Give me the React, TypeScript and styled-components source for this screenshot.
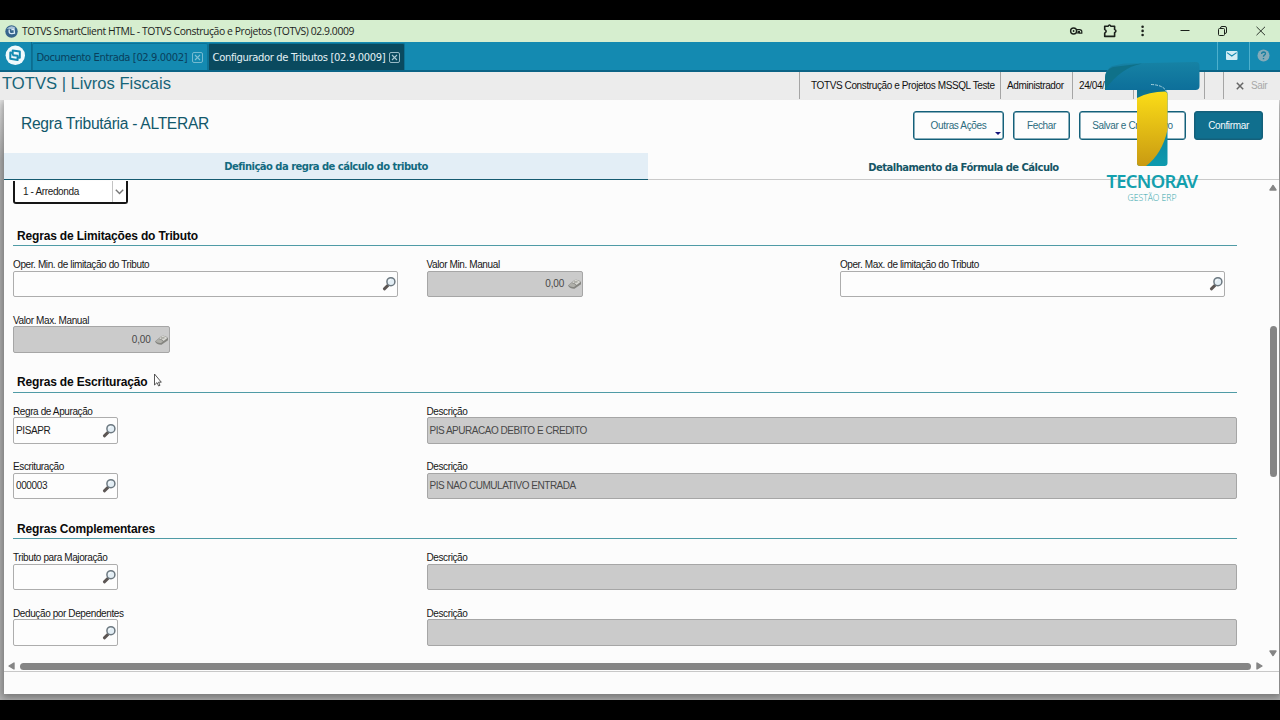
import React from "react";
import styled, { createGlobalStyle } from "styled-components";

const Global = createGlobalStyle`
  * { box-sizing: border-box; }
  html, body { margin: 0; padding: 0; background: #000; overflow: hidden; }
  body { font-family: "Liberation Sans", Arial, sans-serif; }
`;

const Screen = styled.div`
  width: 1280px;
  height: 720px;
  padding: 20px 0;
  background: #000;
  position: relative;
  display: flex;
  flex-direction: column;
  overflow: hidden;
`;

const TitleBar = styled.header`
  height: 22px;
  flex: none;
  background: #d6eecf;
  display: flex;
  align-items: center;
  padding-left: 5px;
`;
const WindowTitle = styled.span`
  font: 10.4px/20px "Open Sans", "Noto Sans", sans-serif;
  letter-spacing: -0.42px;
  color: #1c241c;
  margin: -1px 0 0 4px;
  flex: 1;
  white-space: nowrap;
`;
const WindowIcons = styled.div`
  display: flex;
  align-items: center;
  svg { display: block; }
`;

const TabBar = styled.nav`
  height: 30px;
  flex: none;
  background: #148ab1;
  border-bottom: 2px solid #0b6486;
  display: flex;
`;
const HomeCell = styled.div`
  width: 32px;
  border-right: 1px solid #0c6c8f;
  padding: 3px 0 0 5px;
`;
const AppTab = styled.div<{ $active?: boolean; $width: number }>`
  width: ${(p) => p.$width}px;
  margin-top: 1px;
  padding: 1px 4px 0 3.5px;
  border: 1px solid #0d7396;
  border-width: 1px 1px 0 1px;
  border-radius: 2px 2px 0 0;
  background: ${(p) => (p.$active ? "#0a4a5f" : "#148ab1")};
  color: ${(p) => (p.$active ? "#e4f1f5" : "#093f5c")};
  font: 10px/24px "DejaVu Sans", Verdana, sans-serif;
  letter-spacing: ${(p) => (p.$active ? "-0.35px" : "-0.4px")};
  white-space: nowrap;
  display: flex;
  align-items: center;
  justify-content: space-between;
`;
const TabActions = styled.div`
  margin-left: auto;
  display: flex;
`;
const TabAction = styled.div`
  width: 31.5px;
  border-left: 1px solid #4db0cd;
  display: flex;
  justify-content: center;
  padding: 7px 2px 0 0;
`;

const InfoBar = styled.div`
  height: 27px;
  flex: none;
  background: #ececec;
  display: flex;
`;
const ModuleTitle = styled.h1`
  margin: 0;
  padding-left: 2px;
  flex: 1;
  font-weight: 400;
  font-size: 16.6px;
  line-height: 23px;
  color: #176478;
`;
const InfoCell = styled.div<{ $width: number; $pad?: number }>`
  width: ${(p) => p.$width}px;
  flex: none;
  border-left: 1px solid #a5a5a5;
  padding-left: ${(p) => p.$pad ?? 6}px;
  font-size: 10px;
  letter-spacing: -0.39px;
  line-height: 27px;
  color: #111;
  white-space: nowrap;
`;
const ExitCell = styled(InfoCell)`
  color: #a8a8a8;
  display: flex;
  align-items: center;
  gap: 7px;
`;

const Stage = styled.div`
  flex: 1;
  min-height: 0;
  padding: 1px 1px 7px 4px;
  background: linear-gradient(#ececec, #b4b4b4 60px, #b4b4b4);
  overflow: hidden;
`;
const Panel = styled.main`
  height: 594px;
  background: #fcfcfc;
  box-shadow: 0 2px 8px 2px rgba(0, 0, 0, 0.35);
  clip-path: inset(0 -1px -8px -4px);
  display: flex;
  flex-direction: column;
`;
const PanelHead = styled.div`
  height: 53px;
  flex: none;
  display: flex;
  padding: 11px 16px 0 17px;
`;
const PanelTitle = styled.h2`
  margin: 0;
  flex: 1;
  font-weight: 400;
  font-size: 15.6px;
  letter-spacing: -0.29px;
  line-height: 26px;
  color: #12586b;
`;
const Button = styled.button<{ $width: number; $primary?: boolean; $left?: number }>`
  width: ${(p) => p.$width}px;
  height: 29px;
  margin-left: ${(p) => p.$left ?? 9}px;
  padding: 0;
  border: 1px solid #14607a;
  box-shadow: inset 0 0 0 0.5px #14607a;
  border-radius: 3px;
  background: ${(p) => (p.$primary ? "#106f8e" : "#fdfdfd")};
  color: ${(p) => (p.$primary ? "#f4fafc" : "#2c6c7e")};
  font: 10px/26px "Liberation Sans", Arial, sans-serif;
  letter-spacing: -0.35px;
  position: relative;
`;
const Caret = styled.i`
  position: absolute;
  right: 2px;
  bottom: 4px;
  border: 3px solid transparent;
  border-top-color: #14147a;
  border-bottom: 0;
`;

const PageTabs = styled.div`
  height: 28px;
  flex: none;
  display: flex;
`;
const PageTab = styled.div<{ $active?: boolean }>`
  width: ${(p) => (p.$active ? 644 : 631)}px;
  height: ${(p) => (p.$active ? 27 : 27)}px;
  background: ${(p) => (p.$active ? "#e3eef6" : "transparent")};
  border-bottom: ${(p) => (p.$active ? "1.5px solid #155a70" : "1px solid #c9c9c9")};
  color: ${(p) => (p.$active ? "#126a80" : "#155566")};
  font: bold 10px/${(p) => (p.$active ? 28 : 29)}px "DejaVu Sans", Verdana, sans-serif;
  letter-spacing: -0.53px;
  text-align: center;
`;

const ScrollArea = styled.div`
  height: 491px;
  flex: none;
  display: flex;
  border-bottom: 1px solid #c8c8c8;
`;
const ScrollMain = styled.div`
  width: 1263px;
  display: flex;
  flex-direction: column;
`;
const Form = styled.div`
  height: 479px;
  padding-left: 9px;
  overflow: hidden;
`;
const Select = styled.div`
  width: 115px;
  height: 23px;
  margin-bottom: 21.5px;
  border: 2px solid #161616;
  border-width: 0 2px 2px 2px;
  border-radius: 0 0 3px 3px;
  background: #fff;
  font-size: 10px;
  letter-spacing: -0.36px;
  line-height: 21px;
  padding-left: 8px;
  color: #1a1a1a;
  display: flex;
  justify-content: space-between;
`;
const SelectArrow = styled.span`
  width: 14px;
  border-left: 1px solid #c4c4c4;
  display: flex;
  align-items: center;
  justify-content: center;
`;
const Section = styled.section`
  height: 146.6px;
`;
const SectionTitle = styled.h3`
  margin: 0 0 12px;
  width: 1224px;
  height: 20.5px;
  border-bottom: 1px solid #4f9ba6;
  padding-left: 4px;
  font-size: 12px;
  letter-spacing: -0.165px;
  line-height: 20px;
  color: #0a0a0a;
`;
const Row = styled.div`
  display: grid;
  grid-template-columns: 413.5px 413.4px 1fr;
  height: 55.6px;
`;
const Field = styled.div<{ $span?: number }>`
  grid-column: span ${(p) => p.$span ?? 1};
`;
const Label = styled.label`
  display: block;
  height: 12.5px;
  font-size: 10px;
  letter-spacing: -0.39px;
  line-height: 13px;
  color: #161616;
  white-space: nowrap;
`;
const Input = styled.div<{ $width: number; $disabled?: boolean; $right?: boolean }>`
  width: ${(p) => p.$width}px;
  height: 26.5px;
  border: 1px solid ${(p) => (p.$disabled ? "#a6a6a6" : "#adadad")};
  border-radius: 2px;
  background: ${(p) => (p.$disabled ? "#cbcbcb" : "#fdfdfd")};
  color: ${(p) => (p.$disabled ? "#484848" : "#1c1c1c")};
  font-size: 10px;
  letter-spacing: ${(p) => (p.$right ? "-0.2px" : p.$disabled ? "-0.48px" : "-0.38px")};
  padding: 0 0 0 2px;
  display: flex;
  align-items: center;
  justify-content: ${(p) => (p.$right ? "flex-end" : "space-between")};
  gap: 3px;
  white-space: nowrap;
`;

const HScroll = styled.div`
  height: 11px;
  padding: 1px 3px 0 4px;
  display: flex;
  align-items: center;
  gap: 5px;
`;
const HThumb = styled.div`
  width: 1231px;
  height: 7px;
  border-radius: 4px;
  background: #858585;
`;
const VScroll = styled.div`
  width: 12px;
  padding: 3px 0 14px 0;
  display: flex;
  flex-direction: column;
  justify-content: space-between;
  align-items: center;
`;
const VThumb = styled.div`
  width: 7px;
  height: 151px;
  margin-bottom: 38px;
  border-radius: 4px;
  background: #858585;
`;

const Brand = styled.div`
  position: absolute;
  left: 1102px;
  top: 60px;
  width: 100px;
  display: flex;
  flex-direction: column;
  align-items: center;
`;
const BrandName = styled.div`
  font: 600 18.4px/22px "Noto Sans", "Open Sans", sans-serif;
  letter-spacing: -0.7px;
  color: #14a0ae;
  margin-top: 2px;
`;
const BrandTag = styled.div`
  font: 300 8.6px/11px "Open Sans", "Noto Sans", sans-serif;
  color: #2fa3aa;
  margin-top: 1px;
`;
const Pointer = styled.svg`
  position: absolute;
  left: 153px;
  top: 373px;
`;

const Lens = () => (
  <svg width="15" height="15" viewBox="0 0 15 15">
    <path d="M2.4 12.8 L6.2 9.2" stroke="#5c5654" strokeWidth="3" strokeLinecap="round" />
    <circle cx="8.9" cy="5.7" r="4" fill="#e3eef5" stroke="#6c7880" strokeWidth="1.5" />
    <path d="M6.800 5.500 A2.200 2.200 0 0 1 8.900 3.500" stroke="#fff" fill="none" />
  </svg>
);
const Eraser = () => (
  <svg width="15" height="13" viewBox="0 0 15 13">
    <path d="M1 8.500 L7.500 3 Q11 2 14 5 L14 7.300 L7.500 11.700 Q3 11.900 1 8.500Z" fill="#858580" />
    <path d="M5 5.500 L8 3.100 Q11 2.500 13.400 5.100 L9.600 8.100 Q8 5.700 5 5.500Z" fill="#d9d9d4" />
    <path d="M1.500 8.300 L4.400 6 Q7.400 6.100 9 8.500 L7 10 Q3.400 10.500 1.500 8.300Z" fill="#b0b0aa" />
    <path d="M7 5 L10.500 4.900" stroke="#77776f" strokeWidth=".8" />
  </svg>
);
const CloseBox = ({ color }: { color: string }) => (
  <svg width="11" height="12" viewBox="0 0 11 12" fill="none" stroke={color}>
    <rect x=".5" y=".5" width="10" height="10" rx="1.5" strokeWidth=".9" />
    <path d="M3 3 L8 8 M8 3 L3 8" strokeWidth="1.1" />
  </svg>
);
const Arrow = ({ d, w = 8, h = 8 }: { d: string; w?: number; h?: number }) => (
  <svg width={w} height={h} viewBox={`0 0 ${w} ${h}`}>
    <path d={d} fill="#858585" stroke="#858585" strokeWidth="1.4" strokeLinejoin="round" />
  </svg>
);

type FieldProps = {
  label: string;
  value?: string;
  width: number;
  kind: "search" | "number" | "text";
  span?: number;
};
const FormField = ({ label, value, width, kind, span }: FieldProps) => (
  <Field $span={span}>
    <Label>{label}</Label>
    <Input $width={width} $disabled={kind !== "search"} $right={kind === "number"}>
      <span>{value}</span>
      {kind === "search" && <Lens />}
      {kind === "number" && <Eraser />}
    </Input>
  </Field>
);

export default function App() {
  return (
    <>
      <Global />
      <Screen>
        <TitleBar>
          <svg width="13" height="13" viewBox="0 0 13 13">
            <circle cx="6.5" cy="6.5" r="6.2" fill="#37658c" />
            <path d="M1.5 4 Q6 -1 10.5 2.8 L8 5 Q4 3 1.5 4Z" fill="#a9c3d8" />
            <path d="M4.2 4.5 L4.2 7.2 Q4.6 9 7 8.6 L9.5 8.2 L9 4.2 L6.4 4.8" fill="none" stroke="#d9ebf7" strokeWidth="1.3" />
          </svg>
          <WindowTitle>TOTVS SmartClient HTML - TOTVS Construção e Projetos (TOTVS) 02.9.0009</WindowTitle>
          <WindowIcons>
            <svg width="216" height="22" viewBox="1064 20 216 22" fill="none" stroke="#1b211b">
              <circle cx="1073.6" cy="31" r="3" strokeWidth="1.4" />
              <circle cx="1073.6" cy="31" r=".9" fill="#1b211b" stroke="none" />
              <path d="M1076.4 29.6 H1079.5 Q1081.8 29.800 1081.8 31.500 V33.200 H1079.400 V31.6 H1078.2 V33 H1076.4" strokeWidth="1.2" />
              <path d="M1104.7 26.3 H1108 Q1109.5 23.8 1111 26.3 H1114.6 V29.4 Q1117.2 31 1114.6 32.6 V36.4 H1104.7 V33.2 Q1107.6 31.4 1104.7 29.4Z" strokeWidth="1.6" strokeLinejoin="round" />
              <g fill="#1b211b" stroke="none">
                <circle cx="1142.6" cy="26.8" r="1.3" />
                <circle cx="1142.6" cy="30.9" r="1.3" />
                <circle cx="1142.6" cy="35" r="1.3" />
              </g>
              <path d="M1180.500 30.5 H1189.500" />
              <rect x="1218.5" y="28.5" width="6" height="7" rx="1" />
              <path d="M1220.5 28 Q1220.5 26.5 1222 26.5 H1225 Q1226.5 26.5 1226.5 28 V32 Q1226.5 33.5 1225 33.5" />
              <path d="M1256.500 26.800 L1265 35.200 M1265 26.800 L1256.500 35.200" strokeWidth=".9" />
            </svg>
          </WindowIcons>
        </TitleBar>

        <TabBar>
          <HomeCell>
            <svg width="21" height="21" viewBox="0 0 21 21" fill="none" stroke="#148ab1" strokeWidth="2" strokeLinejoin="round">
              <circle cx="10.3" cy="10.3" r="9.7" fill="#f0f9fc" stroke="none" />
              <path d="M7.700 10.500 V5.600 L14.800 6.600 V12.800 L12.800 12.500" />
              <path d="M7.700 7.900 L5.300 7.600 V13.800 L12.600 15 V10.800 L7.700 10.300" />
            </svg>
          </HomeCell>
          <AppTab $width={176}>
            Documento Entrada [02.9.0002]
            <CloseBox color="#7fc0d4" />
          </AppTab>
          <AppTab $width={197} $active>
            Configurador de Tributos [02.9.0009]
            <CloseBox color="#a9c8d2" />
          </AppTab>
          <TabActions>
            <TabAction>
              <svg width="12" height="13" viewBox="0 0 12 13">
                <rect x="0" y="2" width="11.5" height="9" rx="1" fill="#d3edf5" />
                <path d="M1 3.6 L5.8 7 L10.6 3.6" stroke="#148ab1" strokeWidth="1.1" fill="none" />
              </svg>
            </TabAction>
            <TabAction>
              <svg width="13" height="13" viewBox="0 0 13 13">
                <circle cx="6.5" cy="6.5" r="6" fill="#84abb9" />
                <path d="M4.6 5 Q4.7 3 6.6 3 Q8.6 3.1 8.4 4.9 Q8.2 5.8 7.1 6.4 Q6.5 6.8 6.5 7.7 M6.5 9 V10.2" stroke="#1a7fa0" strokeWidth="1.4" fill="none" />
              </svg>
            </TabAction>
          </TabActions>
        </TabBar>

        <InfoBar>
          <ModuleTitle>TOTVS | Livros Fiscais</ModuleTitle>
          <InfoCell $width={201} $pad={11}>TOTVS Construção e Projetos MSSQL Teste</InfoCell>
          <InfoCell $width={72}>Administrador</InfoCell>
          <InfoCell $width={61}>24/04/2024</InfoCell>
          <InfoCell $width={71} />
          <InfoCell $width={19} />
          <ExitCell $width={57} $pad={12}>
            <svg width="8" height="8" viewBox="0 0 8 8">
              <path d="M.8 .8 L7.2 7.2 M7.2 .8 L.8 7.2" stroke="#666" strokeWidth="1.5" />
            </svg>
            Sair
          </ExitCell>
        </InfoBar>

        <Stage>
          <Panel>
            <PanelHead>
              <PanelTitle>Regra Tributária - ALTERAR</PanelTitle>
              <Button $width={91}>
                Outras Ações
                <Caret />
              </Button>
              <Button $width={57}>Fechar</Button>
              <Button $width={107}>Salvar e Criar Novo</Button>
              <Button $width={69} $left={8} $primary>Confirmar</Button>
            </PanelHead>
            <PageTabs>
              <PageTab $active>Definição da regra de cálculo do tributo</PageTab>
              <PageTab>Detalhamento da Fórmula de Cálculo</PageTab>
            </PageTabs>
            <ScrollArea>
              <ScrollMain>
                <Form>
                  <Select>
                    1 - Arredonda
                    <SelectArrow>
                      <svg width="9" height="6" viewBox="0 0 9 6">
                        <path d="M.8 .8 L4.5 4.6 L8.2 .8" stroke="#777" strokeWidth="1.4" fill="none" />
                      </svg>
                    </SelectArrow>
                  </Select>
                  <Section>
                    <SectionTitle>Regras de Limitações do Tributo</SectionTitle>
                    <Row>
                      <FormField label="Oper. Min. de limitação do Tributo" width={385} kind="search" />
                      <FormField label="Valor Min. Manual" value="0,00" width={156.5} kind="number" />
                      <FormField label="Oper. Max. de limitação do Tributo" width={385} kind="search" />
                    </Row>
                    <Row>
                      <FormField label="Valor Max. Manual" value="0,00" width={156.5} kind="number" />
                    </Row>
                  </Section>
                  <Section>
                    <SectionTitle>Regras de Escrituração</SectionTitle>
                    <Row>
                      <FormField label="Regra de Apuração" value="PISAPR" width={105} kind="search" />
                      <FormField label="Descrição" value="PIS APURACAO DEBITO E CREDITO" width={810.5} kind="text" span={2} />
                    </Row>
                    <Row>
                      <FormField label="Escrituração" value="000003" width={105} kind="search" />
                      <FormField label="Descrição" value="PIS NAO CUMULATIVO ENTRADA" width={810.5} kind="text" span={2} />
                    </Row>
                  </Section>
                  <Section>
                    <SectionTitle>Regras Complementares</SectionTitle>
                    <Row>
                      <FormField label="Tributo para Majoração" width={105} kind="search" />
                      <FormField label="Descrição" width={810.5} kind="text" span={2} />
                    </Row>
                    <Row>
                      <FormField label="Dedução por Dependentes" width={105} kind="search" />
                      <FormField label="Descrição" width={810.5} kind="text" span={2} />
                    </Row>
                  </Section>
                </Form>
                <HScroll>
                  <Arrow d="M6 1 L1 4 L6 7Z" w={7} />
                  <HThumb />
                  <Arrow d="M1 1 L6 4 L1 7Z" w={7} />
                </HScroll>
              </ScrollMain>
              <VScroll>
                <Arrow d="M1 6 L4 1.5 L7 6Z" />
                <VThumb />
                <Arrow d="M1 2 L4 6.5 L7 2Z" />
              </VScroll>
            </ScrollArea>
          </Panel>
        </Stage>

        <Brand>
          <svg width="100" height="108" viewBox="1102 60 100 108">
            <defs>
              <linearGradient id="bar" x1="0" y1="0" x2="0" y2="1">
                <stop offset="0" stopColor="#1682a4" />
                <stop offset="1" stopColor="#0d6f9a" />
              </linearGradient>
              <linearGradient id="gold" x1="0" y1="0" x2="0" y2="1">
                <stop offset="0" stopColor="#fbdd17" />
                <stop offset="1" stopColor="#c99a12" />
              </linearGradient>
              <linearGradient id="stem" x1="0" y1="0" x2="0" y2="1">
                <stop offset="0" stopColor="#0d708c" />
                <stop offset="1" stopColor="#0e9aae" />
              </linearGradient>
            </defs>
            <path d="M1137 88 H1163 Q1167.5 90 1167.5 94 V163 Q1167.5 166 1164.500 166 H1140 Q1137 166 1137 163Z" fill="url(#stem)" />
            <path d="M1105 78 Q1105 70 1112 66 L1124 63.500 L1196 62 Q1199.500 62 1199.500 66 V86 Q1199.500 90 1195.500 90 H1105Z" fill="url(#bar)" />
            <path d="M1105 90 V78 Q1105 70 1113 67 L1142 63.500 Q1120 68 1105 90Z" fill="#0f7189" />
            <path d="M1137 98 Q1149 91.500 1165 91.500 Q1167.500 92 1167.500 95 V130 Q1162 154 1146 166 H1140 Q1137 166 1137 163Z" fill="url(#gold)" />
            <path d="M1151 84.500 Q1164 85 1166.500 92" fill="none" stroke="#c9e7ec" strokeWidth=".8" strokeDasharray="3 1" />
          </svg>
          <BrandName>TECNORAV</BrandName>
          <BrandTag>GESTÃO ERP</BrandTag>
        </Brand>
        <Pointer width="10" height="15" viewBox="0 0 10 15">
          <path d="M1.500 1 V12 L4 9.600 L5.600 13 L7 12.300 L5.500 9.200 H8.300Z" fill="#fff" stroke="#444" strokeWidth=".9" />
        </Pointer>
      </Screen>
    </>
  );
}
